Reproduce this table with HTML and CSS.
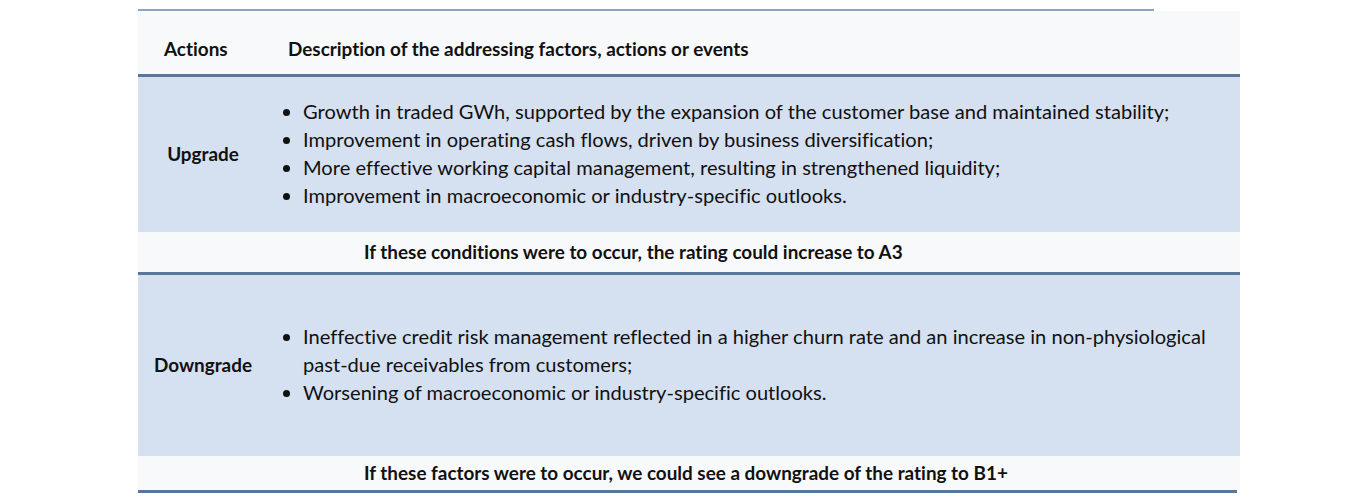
FILE: index.html
```html
<!DOCTYPE html>
<html lang="en">
<head>
<meta charset="utf-8">
<title>Rating drivers</title>
<link rel="stylesheet" href="styles.css">
</head>
<body>
<div class="page">
  <div class="topline"></div>
  <div class="table">
    <div class="head">
      <div class="head-action">Actions</div>
      <div class="head-desc">Description of the addressing factors, actions or events</div>
    </div>
    <div class="row row-up">
      <div class="action">Upgrade</div>
      <ul class="list">
        <li>Growth in traded GWh, supported by the expansion of the customer base and maintained stability;</li>
        <li>Improvement in operating cash flows, driven by business diversification;</li>
        <li>More effective working capital management, resulting in strengthened liquidity;</li>
        <li>Improvement in macroeconomic or industry-specific outlooks.</li>
      </ul>
    </div>
    <div class="foot foot-up">If these conditions were to occur, the rating could increase to A3</div>
    <div class="row row-down">
      <div class="action">Downgrade</div>
      <ul class="list">
        <li>Ineffective credit risk management reflected in a higher churn rate and an increase in non-physiological past-due receivables from customers;</li>
        <li>Worsening of macroeconomic or industry-specific outlooks.</li>
      </ul>
    </div>
    <div class="foot foot-down">If these factors were to occur, we could see a downgrade of the rating to B1+</div>
    <div class="bottomline"></div>
  </div>
</div>
</body>
</html>
```
FILE: styles.css
```css
html, body {
  margin: 0;
  padding: 0;
  background: #ffffff;
}
body {
  font-family: Lato, "Open Sans", sans-serif;
  color: #111111;
  font-variant-ligatures: none;
}
.page {
  padding-top: 9px;
  padding-left: 138px;
}
.topline {
  width: 1016px;
  height: 2px;
  background: #8ea4bd;
}
.table {
  width: 1102px;
}
.head {
  display: flex;
  align-items: center;
  box-sizing: border-box;
  height: 66px;
  padding-top: 12px;
  background: #f8f9fb;
  border-bottom: 3px solid #5b7797;
  font-weight: 700;
  font-size: 18.9px;
}
.head-action {
  width: 124px;
  padding-left: 26px;
  flex: none;
}
.row {
  display: flex;
  align-items: center;
  background: #d5e0f0;
}
.row-up { height: 155px; }
.row-down { height: 181px; }
.action {
  width: 130px;
  flex: none;
  text-align: center;
  font-weight: 700;
  font-size: 18.9px;
  padding-bottom: 3px;
}
.list {
  margin: 0;
  padding: 0 0 4px 35px;
  font-size: 20.1px;
  line-height: 28px;
  width: 925px;
}
.foot {
  display: flex;
  align-items: center;
  padding-left: 226px;
  background: #f8f9fb;
  font-weight: 700;
  font-size: 18.9px;
}
.foot-up {
  height: 38px;
  padding-bottom: 2px;
  border-bottom: 3px solid #5b7797;
}
.foot-down {
  height: 32px;
  padding-bottom: 2px;
}
.bottomline {
  width: 1099px;
  height: 3px;
  background: #5b7797;
}
```
